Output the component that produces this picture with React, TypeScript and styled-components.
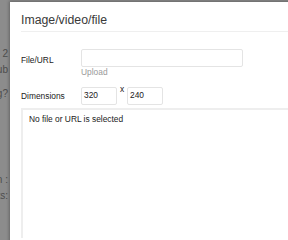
import React from "react";
import styled, { createGlobalStyle } from "styled-components";

const Global = createGlobalStyle`
  html, body { margin: 0; padding: 0; background: #fff; }
  body { font-family: "Liberation Sans", Arial, Helvetica, sans-serif; }
`;

const Page = styled.div`
  position: relative;
  width: 288px;
  height: 240px;
  overflow: hidden;
  background: #fff;
`;

const BackPage = styled.div`
  display: flex;
  flex-direction: column;
  width: 8px;
  padding-top: 46px;
  font-size: 10px;
  color: #8e8e8e;
`;

const BackLine = styled.div<{ $gap?: number }>`
  display: flex;
  justify-content: flex-end;
  white-space: nowrap;
  height: 16px;
  line-height: 16px;
  margin-top: ${(p) => p.$gap ?? 0}px;
`;

const Overlay = styled.div`
  position: absolute;
  inset: 0;
  background: rgba(0, 0, 0, 0.45);
`;

const Modal = styled.div`
  position: absolute;
  left: 10px;
  top: 2px;
  width: 420px;
  height: 400px;
  background: #fff;
  box-shadow: 0 0 3px 1px rgba(0, 0, 0, 0.28);
  padding: 0 11px;
  box-sizing: border-box;
  display: flex;
  flex-direction: column;
`;

const Header = styled.div`
  padding: 11px 0 4px;
  border-bottom: 1px solid #efefef;
`;

const Title = styled.h4`
  margin: 0;
  font-size: 12.3px;
  font-weight: 400;
  color: #3a3a3a;
  line-height: 14px;
`;

const Body = styled.div`
  display: flex;
  flex-direction: column;
  padding-top: 17px;
`;

const Row = styled.div<{ $gap?: number }>`
  display: flex;
  align-items: flex-start;
  margin-top: ${(p) => p.$gap ?? 0}px;
`;

const Label = styled.label<{ $drop?: number }>`
  width: 60px;
  font-size: 8.4px;
  color: #222;
  line-height: 18px;
  padding-top: ${(p) => p.$drop ?? 0}px;
`;

const Field = styled.div`
  display: flex;
  flex-direction: column;
`;

const Input = styled.div<{ $w: number }>`
  width: ${(p) => p.$w}px;
  height: 18px;
  box-sizing: border-box;
  border: 1px solid #e4e4e4;
  border-radius: 2px;
  font-size: 8.4px;
  color: #222;
  line-height: 14px;
  padding-left: 2px;
`;

const Hint = styled.div`
  font-size: 8.4px;
  color: #999;
  line-height: 9px;
  margin-top: 1px;
`;

const Times = styled.span`
  font-size: 8.4px;
  color: #222;
  width: 10px;
  text-align: center;
  line-height: 9px;
  margin-top: -2px;
`;

const Preview = styled.div`
  margin-top: 3px;
  height: 130px;
  box-sizing: border-box;
  border-top: 2px solid #eeeeee;
  border-left: 2px solid #eeeeee;
  padding: 4px 6px;
  font-size: 8.4px;
  line-height: 10px;
  color: #222;
`;

export default function App() {
  return (
    <Page>
      <Global />
      <BackPage>
        <BackLine>Step 2</BackLine>
        <BackLine>Sub</BackLine>
        <BackLine $gap={8}>Sizing?</BackLine>
        <BackLine $gap={70}>Shown :</BackLine>
        <BackLine>Results:</BackLine>
      </BackPage>
      <Overlay />
      <Modal>
        <Header>
          <Title>Image/video/file</Title>
        </Header>
        <Body>
          <Row>
            <Label $drop={2}>File/URL</Label>
            <Field>
              <Input $w={162} />
              <Hint>Upload</Hint>
            </Field>
          </Row>
          <Row $gap={10}>
            <Label>Dimensions</Label>
            <Input $w={36}>320</Input>
            <Times>x</Times>
            <Input $w={36}>240</Input>
          </Row>
        </Body>
        <Preview>No file or URL is selected</Preview>
      </Modal>
    </Page>
  );
}
